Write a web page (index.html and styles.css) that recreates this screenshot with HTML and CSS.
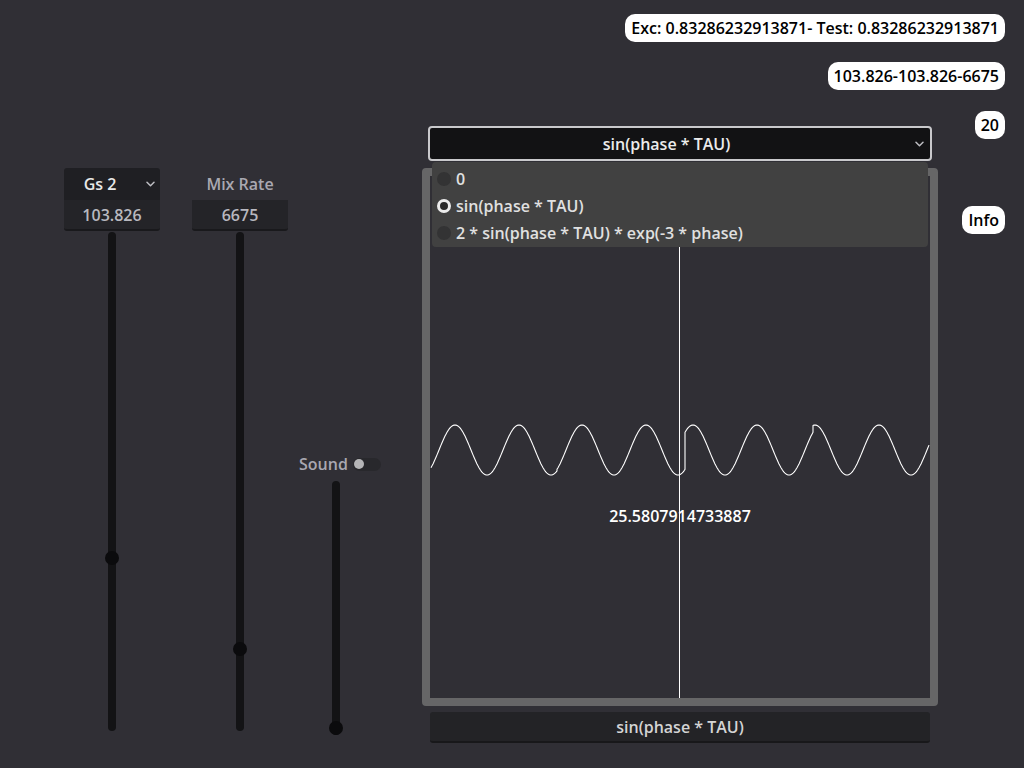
FILE: index.html
```html
<!DOCTYPE html>
<html lang="en">
<head>
<meta charset="utf-8">
<title>Wave</title>
<link rel="stylesheet" href="styles.css">
</head>
<body>
<div class="app">
  <div class="col col-note">
    <div class="option">
      <span class="option-text">Gs 2</span>
      <svg class="chev" width="9" height="6" viewBox="0 0 9 6"><path d="M1 1.2 L4.5 4.7 L8 1.2"/></svg>
    </div>
    <div class="spin">103.826</div>
    <div class="vslider long"><div class="grab" style="top:319px"></div></div>
  </div>

  <div class="col col-rate">
    <div class="caption">Mix Rate</div>
    <div class="spin">6675</div>
    <div class="vslider long"><div class="grab" style="top:410px"></div></div>
  </div>

  <div class="col col-sound">
    <div class="sound-row">
      <span class="caption-inline">Sound</span>
      <span class="switch"><span class="knob"></span></span>
    </div>
    <div class="vslider short"><div class="grab" style="top:240px"></div></div>
  </div>

  <div class="col col-graph">
    <div class="dropdown">
      <span class="dropdown-text">sin(phase * TAU)</span>
      <svg class="chev" width="9" height="6" viewBox="0 0 9 6"><path d="M1 1.2 L4.5 4.7 L8 1.2"/></svg>
    </div>
    <div class="panel">
      <svg class="plot" width="500" height="522" viewBox="0 0 500 522">
        <line x1="249.5" y1="0" x2="249.5" y2="522" class="cursor"/>
        <path id="wave" class="wave" d=""/>
      </svg>
      <div class="value">25.5807914733887</div>
      <div class="popup">
        <div class="item"><span class="radio"></span>0</div>
        <div class="item"><span class="radio on"></span>sin(phase * TAU)</div>
        <div class="item"><span class="radio"></span>2 * sin(phase * TAU) * exp(-3 * phase)</div>
      </div>
    </div>
    <div class="bottom-btn">sin(phase * TAU)</div>
  </div>

  <div class="col col-info">
    <div class="tag t1">Exc: 0.83286232913871- Test: 0.83286232913871</div>
    <div class="tag t2">103.826-103.826-6675</div>
    <div class="tag t3">20</div>
    <div class="tag t4">Info</div>
  </div>
</div>
<script src="script.js"></script>
</body>
</html>
```

FILE: styles.css
```css
* { box-sizing: border-box; }
html, body { margin: 0; height: 100%; }
body {
  background: #302f35;
  font-family: "Open Sans", "Noto Sans", sans-serif;
  font-weight: 600;
  font-size: 16px;
  color: #dfdfdf;
  overflow: hidden;
}
.app { display: flex; height: 768px; padding-left: 64px; }
.col { display: flex; flex-direction: column; flex: none; }
.col-note { width: 96px; padding-top: 168px; align-items: center; }
.col-rate { width: 96px; margin-left: 32px; padding-top: 168px; align-items: center; }
.col-sound { width: 82px; margin-left: 11px; padding-top: 457px; }
.col-graph { width: 516px; margin-left: 41px; padding-top: 126px; }
.col-info { flex: 1 1 0; min-width: 0; align-items: flex-end; padding: 14px 19px 0 0; }

.chev { display: block; flex: none; }
.chev path { fill: none; stroke: #bdbdc2; stroke-width: 1.5; stroke-linecap: round; stroke-linejoin: round; }

.option {
  width: 96px; height: 32px;
  background: #1f1f23;
  border-radius: 3px 3px 0 0;
  display: flex; align-items: center;
  padding-right: 5px;
}
.option-text { flex: 1; text-align: center; color: #e8e8e8; line-height: 22px; }
.option .chev { margin-left: 10px; }

.spin {
  width: 96px; height: 31px;
  background: #242428;
  border-bottom: 2px solid #19191c;
  border-radius: 0 0 3px 3px;
  display: flex; align-items: center; justify-content: center;
  color: #b8b8bf; line-height: 22px;
}
.caption {
  height: 32px; display: flex; align-items: center; justify-content: center;
  color: #a9a8b1; line-height: 22px;
}

.vslider { width: 8px; background: #131315; border-radius: 4px; position: relative; flex: none; }
.vslider.long { height: 499px; margin-top: 1px; }
.vslider.short { height: 254px; margin-top: 10px; margin-left: 33px; }
.grab {
  position: absolute; left: -3px;
  width: 14px; height: 14px; border-radius: 50%;
  background: #0b0b0d;
}

.sound-row { display: flex; align-items: center; height: 14px; }
.caption-inline { color: #a9a8b1; line-height: 14px; }
.switch {
  width: 29px; height: 13px; border-radius: 7px;
  background: #28282c; margin-left: 5px;
  display: flex; align-items: center; padding-left: 1px;
}
.knob { width: 10px; height: 10px; border-radius: 50%; background: #b5b5b7; }

.dropdown {
  margin: 0 6px; height: 35px;
  background: #121214;
  border: 2px solid #c9c9cc;
  border-radius: 4px;
  display: flex; align-items: center;
  padding-right: 6px;
}
.dropdown-text { flex: 1; text-align: center; color: #ececec; line-height: 22px; }
.dropdown .chev { margin-left: 12px; }

.panel {
  margin-top: 7px; height: 538px;
  border: 8px solid #666667;
  border-radius: 4px;
  position: relative;
}
.plot { display: block; }
.cursor { stroke: #ffffff; stroke-width: 1; }
.wave { fill: none; stroke: #ffffff; stroke-width: 1.1; stroke-linejoin: round; }
.value {
  position: absolute; left: 0; right: 0; top: 329px;
  text-align: center; color: #ffffff; line-height: 22px;
}
.popup {
  position: absolute; left: 2px; top: -14px;
  width: 496px; height: 85px;
  background: #414141;
  border-radius: 4px;
  padding-top: 3px;
}
.item { height: 27px; display: flex; align-items: center; padding-left: 5px; color: #e0e0e0; }
.radio { width: 14px; height: 14px; border-radius: 50%; background: #333334; margin-right: 5px; flex: none; }
.radio.on { background: #2a2a2a; border: 3px solid #ececec; }

.bottom-btn {
  margin: 6px 8px 0; height: 31px;
  background: #232326;
  border-bottom: 2px solid #18181a;
  border-radius: 3px;
  display: flex; align-items: center; justify-content: center;
  color: #d4d4d4; line-height: 22px;
}

.tag {
  flex: none;
  color: #000;
  background: #fff;
  border-radius: 10px;
  padding: 3px 6px;
  line-height: 22px;
  white-space: nowrap;
}
.t2 { margin-top: 20px; }
.t3 { margin-top: 21px; }
.t4 { margin-top: 67px; }
```

FILE: script.js
```js
(function () {
  var P = 64, A = 25, cy = 274;
  var chunks = [[431, 557, 455], [557, 685, 582], [685, 813, 693], [813, 929, 815]];
  var d = '';
  chunks.forEach(function (c) {
    for (var x = c[0]; x <= c[1] + 0.001; x += 1) {
      var y = cy - A * Math.cos(2 * Math.PI * (x - c[2]) / P);
      d += (d ? 'L' : 'M') + (x - 430).toFixed(1) + ' ' + y.toFixed(2);
    }
  });
  document.getElementById('wave').setAttribute('d', d);
})();
```
